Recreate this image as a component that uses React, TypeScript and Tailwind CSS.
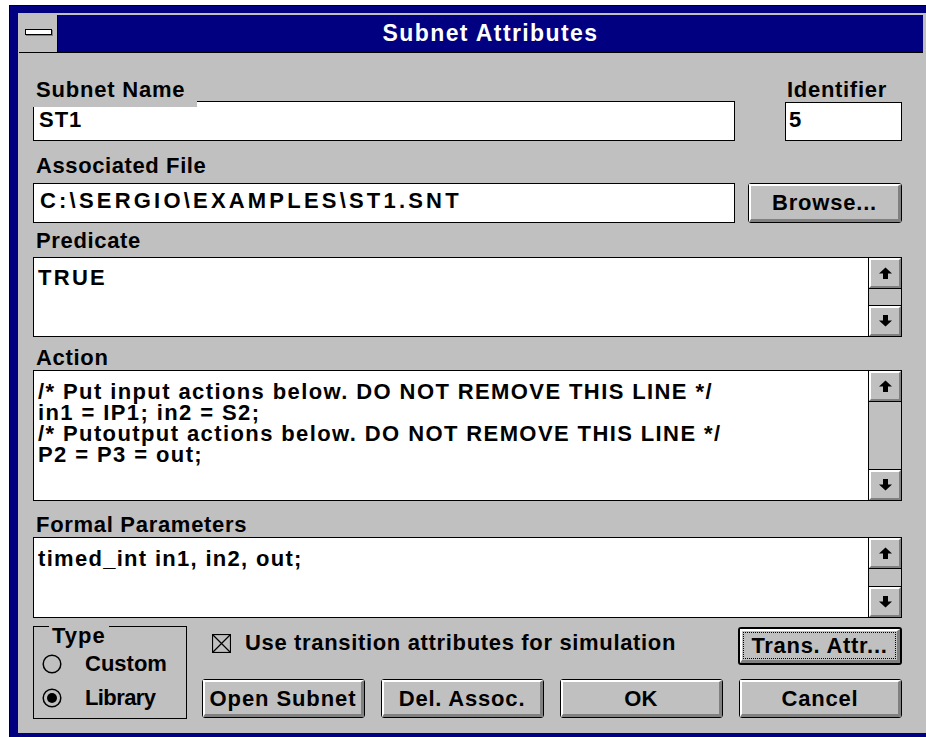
import React from 'react';

// Windows 3.1 style "Subnet Attributes" dialog
const sys = "font-['Liberation_Sans',Arial,sans-serif] font-bold text-[22px] leading-[21px] text-black whitespace-pre";

function Arrow({ down }: { down?: boolean }) {
  return (
    <svg width="13" height="12" viewBox="0 0 13 12" className={down ? 'rotate-180' : ''}>
      <path d="M6.5 0.5L13 6.5H9V12H4V6.5H0Z" fill="#000" />
    </svg>
  );
}

function ScrollButton({ down }: { down?: boolean }) {
  return (
    <div className={`h-[31px] bg-[#c0c0c0] border-black ${down ? 'border-t' : 'border-b'}`}>
      <div className="h-full flex items-center justify-center border-2 border-t-white border-l-white border-r-[#808080] border-b-[#808080]">
        <Arrow down={down} />
      </div>
    </div>
  );
}

function ScrollBar() {
  return (
    <div className="w-[33px] shrink-0 border-l border-black bg-[#c0c0c0] flex flex-col justify-between">
      <ScrollButton />
      <ScrollButton down />
    </div>
  );
}

function Memo({ height, lines, tracking, pt }: { height: string; lines: string[]; tracking: string; pt: string }) {
  return (
    <div className={`${height} flex border border-black bg-white`}>
      <div className={`flex-1 pl-[4px] ${pt}`}>
        {lines.map((line, i) => (
          <div key={i} className={`${sys} leading-[19px] ${tracking}`}>
            {line}
          </div>
        ))}
      </div>
      <ScrollBar />
    </div>
  );
}

function PushButton({
  label,
  className,
  tracking = 'tracking-[0.8px]',
  focused,
}: {
  label: string;
  className: string;
  tracking?: string;
  focused?: boolean;
}) {
  return (
    <div className={`${className} rounded-[3px] border-black bg-[#c0c0c0] ${focused ? 'border-2' : 'border'}`}>
      <div className="h-full flex items-stretch justify-center border-t-2 border-l-2 border-b-[3px] border-r-[3px] border-t-white border-l-white border-b-[#808080] border-r-[#808080]">
        {focused ? (
          <div className="flex-1 m-px flex items-center justify-center border border-dotted border-black">
            <span className={`${sys} ${tracking}`}>{label}</span>
          </div>
        ) : (
          <div className="flex items-center">
            <span className={`${sys} ${tracking}`}>{label}</span>
          </div>
        )}
      </div>
    </div>
  );
}

function Radio({ on }: { on?: boolean }) {
  return (
    <svg width="20" height="20" viewBox="0 0 20 20">
      <circle cx="10" cy="10" r="8.8" fill="none" stroke="#000" strokeWidth="1.5" />
      {on && <circle cx="10" cy="10" r="5" fill="#000" />}
    </svg>
  );
}

function CheckBox() {
  return (
    <svg width="19" height="19" viewBox="0 0 19 19">
      <rect x="0.5" y="0.5" width="18" height="18" fill="none" stroke="#000" strokeWidth="1.2" />
      <path d="M1 1L18 18M18 1L1 18" stroke="#000" strokeWidth="1.2" />
    </svg>
  );
}

export default function App() {
  return (
    <div className="w-[926px] h-[737px] bg-white overflow-hidden pl-[9px] pt-[5px]">
      <div className="h-full border-l border-t border-black bg-[#000080] pl-[8px] pt-[7px] pb-[4px]">
        <div className="h-full bg-[#c0c0c0] pl-px pt-[2px] flex flex-col">
          {/* title bar */}
          <div className="h-[38px] flex border-b border-black mr-[3px]">
            <div className="w-[39px] border-r border-black bg-[#c0c0c0] pl-[6px] pt-[14px]">
              <div className="w-[27px] h-[6px] border border-black bg-white shadow-[1px_1px_0_#808080]" />
            </div>
            <div className="flex-1 bg-[#000080] flex items-center justify-center">
              <span className="font-['Liberation_Sans',Arial,sans-serif] font-bold text-[23px] leading-[23px] text-white tracking-[1.4px]">
                Subnet Attributes
              </span>
            </div>
          </div>

          {/* dialog body */}
          <div className="flex-1 w-[883px] pl-[14px] pt-[26px]">
            <div className="flex">
              <div className="w-[702px]">
                <div className={`relative z-10 w-[164px] h-[28px] -mb-[6px] pl-[3px] bg-[#c0c0c0] ${sys} tracking-[0.8px]`}>
                  Subnet Name
                </div>
                <div className="h-[40px] border border-black bg-white pl-[5px] pt-[7px]">
                  <span className={`${sys} tracking-[1px]`}>ST1</span>
                </div>
              </div>
              <div className="ml-[50px] w-[117px]">
                <div className={`pl-[2px] ${sys} tracking-[0.7px]`}>Identifier</div>
                <div className="mt-[2px] h-[39px] border border-black bg-white pl-[3px] pt-[6px]">
                  <span className={sys}>5</span>
                </div>
              </div>
            </div>

            <div className={`mt-[14px] pl-[3px] ${sys} tracking-[0.6px]`}>Associated File</div>
            <div className="mt-[7px] h-[40px] flex">
              <div className="w-[702px] border border-black bg-white pl-[6px] pt-[6px]">
                <span className={`${sys} tracking-[3.2px]`}>C:\SERGIO\EXAMPLES\ST1.SNT</span>
              </div>
              <PushButton className="ml-[13px] w-[154px] h-full" label="Browse..." />
            </div>

            <div className={`mt-[7px] pl-[3px] ${sys} tracking-[0.65px]`}>Predicate</div>
            <div className="mt-[6px]">
              <Memo height="h-[80px]" pt="pt-[9px]" tracking="tracking-[2.3px]" lines={['TRUE']} />
            </div>

            <div className={`mt-[10px] pl-[3px] ${sys} tracking-[0.7px]`}>Action</div>
            <div className="mt-[2px]">
              <Memo
                height="h-[131px]"
                pt="pt-[10px]"
                tracking="tracking-[1.4px]"
                lines={[
                  '/* Put input actions below. DO NOT REMOVE THIS LINE */',
                  'in1 = IP1; in2 = S2;',
                  '/* Putoutput actions below. DO NOT REMOVE THIS LINE */',
                  'P2 = P3 = out;',
                ]}
              />
            </div>

            <div className={`mt-[13px] pl-[3px] ${sys} tracking-[0.7px]`}>Formal Parameters</div>
            <div className="mt-[2px]">
              <Memo height="h-[81px]" pt="pt-[10px]" tracking="tracking-[1.3px]" lines={['timed_int in1, in2, out;']} />
            </div>

            {/* type group, options and command buttons */}
            <div className="mt-[8px] h-[93px] flex">
              <div className="relative w-[154px] h-full border border-black">
                <div className={`absolute left-[15px] -top-[2px] px-[3px] bg-[#c0c0c0] ${sys} tracking-[1px]`}>Type</div>
                <div className="pl-[8px] pt-[26px]">
                  <div className="h-[21px] flex items-center">
                    <Radio />
                    <span className={`ml-[23px] ${sys}`}>Custom</span>
                  </div>
                  <div className="mt-[13px] h-[21px] flex items-center">
                    <Radio on />
                    <span className={`ml-[23px] ${sys} tracking-[-0.6px]`}>Library</span>
                  </div>
                </div>
              </div>

              <div className="ml-[15px] flex-1 flex flex-col">
                <div className="h-[39px] flex">
                  <div className="ml-[10px] mt-[8px]">
                    <CheckBox />
                  </div>
                  <div className={`ml-[14px] mt-[6px] ${sys} tracking-[0.66px]`}>Use transition attributes for simulation</div>
                  <PushButton focused className="ml-auto mt-px w-[164px] h-[38px]" label="Trans. Attr..." tracking="tracking-[0.7px]" />
                </div>
                <div className="mt-[14px] h-[39px] flex gap-[16px]">
                  <PushButton className="w-[163px] h-full" label="Open Subnet" tracking="tracking-[0.9px]" />
                  <PushButton className="w-[163px] h-full" label="Del. Assoc." />
                  <PushButton className="w-[163px] h-full" label="OK" tracking="tracking-[0.3px]" />
                  <PushButton className="w-[163px] h-full" label="Cancel" />
                </div>
              </div>
            </div>
          </div>
        </div>
      </div>
    </div>
  );
}
